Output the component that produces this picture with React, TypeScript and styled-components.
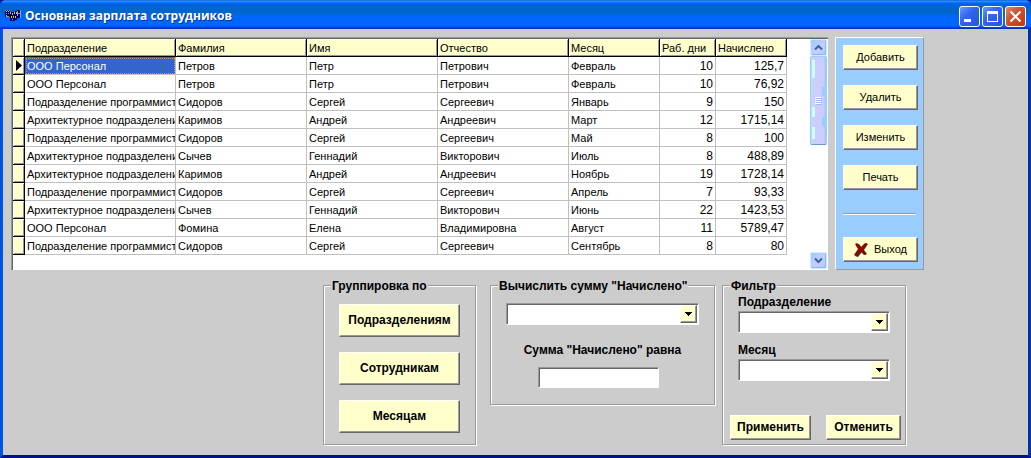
import React from 'react';
import styled, { createGlobalStyle, css } from 'styled-components';

const cream = '#ffffcc';
const face = '#cccccc';
const shade = '#999999';
const dark = '#666666';

const GlobalStyle = createGlobalStyle`
  *, *::before, *::after { box-sizing: border-box; }
  body { margin: 0; background: #0a1a9a; font: 11px/14px "Liberation Sans", Arial, sans-serif; color: #000; }
  button, input, select { font: inherit; color: inherit; }
`;

const Window = styled.div`
  display: flex;
  flex-direction: column;
  min-height: 100vh;
  border: solid;
  border-width: 0 3px 3px;
  border-color: #0054e3 #0831a0 #00138c #0054e3;
  border-radius: 6px 6px 0 0;
  background: ${face};
`;

const TitleBar = styled.header`
  display: flex;
  align-items: center;
  gap: 3px;
  height: 29px;
  margin: 0 -3px;
  padding: 3px 5px 0 5px;
  border-radius: 6px 6px 0 0;
  background: linear-gradient(#0048c8 0, #3399ff 1px, #0066ff 3px, #0060e0 5px, #0066cc 7px, #0066cc 13px, #0066ff 16px, #0066ff 26px, #0033cc 28px, #0033cc 29px);
`;

const Title = styled.h1`
  flex: 1;
  margin: 0;
  color: #fff;
  font: bold 12px/16px "Open Sans", "Noto Sans", sans-serif;
  text-shadow: 1px 1px 0 #003399;
`;

const CaptionButtons = styled.div`
  display: flex;
  gap: 2px;
`;

const CaptionButton = styled.button<{ $close?: boolean }>`
  display: grid;
  width: 21px;
  height: 21px;
  padding: 0;
  border: 1px solid #fff;
  border-radius: 3px;
  background: ${p => p.$close
    ? 'linear-gradient(135deg, #e8876a, #cc5533 40%, #cc3300)'
    : 'linear-gradient(135deg, #6699ff, #3366ee 40%, #2255dd)'};
`;

const Content = styled.main`
  flex: 1;
  padding: 8px 8px 9px;
`;

const TopRow = styled.div`
  display: flex;
  gap: 7px;
`;

const GridBox = styled.div`
  display: flex;
  justify-content: space-between;
  width: 817px;
  height: 233px;
  background: #fff;
  border: solid;
  border-width: 1px 0 0 1px;
  border-color: ${shade};
  box-shadow: inset 1px 1px 0 ${dark};
  padding: 1px 1px 0 1px;
`;

const Grid = styled.table`
  align-self: flex-start;
  width: 774px;
  table-layout: fixed;
  border-collapse: separate;
  border-spacing: 0;
`;

const HeadCell = styled.th<{ $w: number }>`
  width: ${p => p.$w}px;
  height: 18px;
  padding: 0 0 0 2px;
  overflow: hidden;
  border-right: 1px solid #000;
  border-bottom: 1px solid #000;
  background: ${cream};
  box-shadow: inset 1px 1px 0 #fff, inset -1px -1px 0 ${shade};
  font-weight: normal;
  text-align: left;
  white-space: nowrap;
`;

const Marker = styled.td`
  height: 18px;
  padding: 0 0 0 3px;
  border-right: 1px solid #000;
  border-bottom: 1px solid #000;
  background: ${cream};
  box-shadow: inset 1px 1px 0 #fff, inset -1px -1px 0 ${shade};
  svg { display: block; }
`;

const Cell = styled.td<{ $right?: boolean; $selected?: boolean }>`
  height: 18px;
  padding: 0 2px;
  overflow: hidden;
  border-right: 1px solid #c0c0c0;
  border-bottom: 1px solid #c0c0c0;
  text-align: ${p => (p.$right ? 'right' : 'left')};
  white-space: nowrap;
  ${p => p.$right && css`font-size: 12px;`}
  ${p => p.$selected && css`
    background: #3366cc;
    color: #fff;
    outline: 1px dotted #cc9933;
    outline-offset: -2px;
  `}
`;

const ScrollBar = styled.div`
  display: flex;
  flex-direction: column;
  width: 17px;
  margin-bottom: 1px;
`;

const ScrollArrow = styled.button`
  height: 17px;
  padding: 0;
  border: 1px solid #cceeff;
  border-radius: 2px;
  background: linear-gradient(135deg, #99ccff, #ccccff 60%, #99ccff);
  box-shadow: inset -1px -1px 0 #88bbee;
  svg { display: block; margin: auto; }
`;

const ScrollTrack = styled.div`
  flex: 1;
`;

const ScrollThumb = styled.div`
  display: grid;
  place-items: center;
  height: 89px;
  border: 1px solid #99ccff;
  border-bottom-color: #6699cc;
  border-radius: 2px;
  background:
    linear-gradient(#ccffff, #ccffff) 1px 3px / 3px 18px no-repeat,
    linear-gradient(#ccffff, #ccffff) 1px 50px / 3px 10px no-repeat,
    linear-gradient(#ccffff, #ccffff) 1px 70px / 3px 12px no-repeat,
    linear-gradient(#99ccff, #99ccff) 11px 30px / 3px 9px no-repeat,
    linear-gradient(#99ccff, #99ccff) 11px 60px / 3px 9px no-repeat,
    linear-gradient(90deg, #bbddff 0, #ccccff 3px, #ccccff 13px, #99ccff 14px);
`;

const ActionPanel = styled.nav`
  display: flex;
  flex-direction: column;
  gap: 15px;
  width: 89px;
  padding: 7px;
  border: 1px solid #fff;
  border-right-color: ${shade};
  border-bottom-color: ${shade};
  background: #99ccff;
`;

const Divider = styled.hr`
  width: 73px;
  height: 2px;
  margin: 8px 0 7px;
  border: 0;
  border-top: 1px solid ${shade};
  background: #fff;
`;

const Button = styled.button<{ $w?: number; $h?: number; $bold?: boolean }>`
  display: flex;
  align-items: center;
  justify-content: center;
  gap: 6px;
  width: ${p => p.$w ?? 75}px;
  height: ${p => p.$h ?? 25}px;
  padding: 0 0 1px;
  border: 1px solid #fff;
  border-right-color: ${dark};
  border-bottom-color: ${dark};
  background: ${cream};
  box-shadow: inset -1px -1px 0 ${shade};
  ${p => p.$bold && css`font-weight: bold; font-size: 12px;`}
`;

const Groups = styled.div`
  display: flex;
  align-items: flex-start;
  gap: 7px;
  padding: 7px 0 0 312px;
`;

const Group = styled.fieldset<{ $w: number; $h: number }>`
  width: ${p => p.$w}px;
  height: ${p => p.$h}px;
  margin: 0;
  padding: 0 15px;
  border: 1px solid ${shade};
  box-shadow: 1px 1px 0 #fff, inset 1px 1px 0 #fff;
  &:first-child { margin-right: 7px; }
`;

const Legend = styled.legend`
  margin-left: -8px;
  padding: 2px 1px 0;
  background: ${face};
  font-weight: bold;
  font-size: 12px;
`;

const Stack = styled.div<{ $gap: number; $top: number }>`
  display: flex;
  flex-direction: column;
  gap: ${p => p.$gap}px;
  padding-top: ${p => p.$top}px;
`;

const Field = styled.div<{ $center?: boolean; $gap?: number }>`
  display: flex;
  flex-direction: column;
  align-items: ${p => (p.$center ? 'center' : 'stretch')};
  gap: ${p => p.$gap ?? 2}px;
`;

const Label = styled.label`
  font-weight: bold;
  font-size: 12px;
`;

const sunken = css`
  border: 1px solid #fff;
  border-top-color: ${shade};
  border-left-color: ${shade};
  border-radius: 0;
  background: #fff;
  box-shadow: inset 1px 1px 0 ${dark};
`;

const TextBox = styled.input`
  ${sunken}
  width: 121px;
  height: 21px;
  margin-right: 8px;
  padding: 0 3px;
`;

const SelectWrap = styled.div`
  display: grid;
  grid-template-columns: 1fr 19px;
`;

const Select = styled.select`
  ${sunken}
  grid-area: 1 / 1 / 2 / 3;
  appearance: none;
  width: 100%;
  height: 22px;
  padding: 0 20px 0 3px;
`;

const DropMark = styled.span`
  grid-area: 1 / 2;
  display: grid;
  place-items: center;
  height: 18px;
  width: 17px;
  margin-top: 2px;
  border: 1px solid #fff;
  border-right-color: ${dark};
  border-bottom-color: ${dark};
  background: ${cream};
  box-shadow: inset -1px -1px 0 ${shade};
  pointer-events: none;
`;

const ButtonRow = styled.div`
  display: flex;
  justify-content: space-between;
  margin: 34px -11px 0 -8px;
`;

const columns = [
  { name: 'Подразделение', w: 151 },
  { name: 'Фамилия', w: 131 },
  { name: 'Имя', w: 131 },
  { name: 'Отчество', w: 131 },
  { name: 'Месяц', w: 91 },
  { name: 'Раб. дни', w: 56 },
  { name: 'Начислено', w: 71 },
];

const rows = [
  ['ООО Персонал', 'Петров', 'Петр', 'Петрович', 'Февраль', '10', '125,7'],
  ['ООО Персонал', 'Петров', 'Петр', 'Петрович', 'Февраль', '10', '76,92'],
  ['Подразделение программист', 'Сидоров', 'Сергей', 'Сергеевич', 'Январь', '9', '150'],
  ['Архитектурное подразделени', 'Каримов', 'Андрей', 'Андреевич', 'Март', '12', '1715,14'],
  ['Подразделение программист', 'Сидоров', 'Сергей', 'Сергеевич', 'Май', '8', '100'],
  ['Архитектурное подразделени', 'Сычев', 'Геннадий', 'Викторович', 'Июль', '8', '488,89'],
  ['Архитектурное подразделени', 'Каримов', 'Андрей', 'Андреевич', 'Ноябрь', '19', '1728,14'],
  ['Подразделение программист', 'Сидоров', 'Сергей', 'Сергеевич', 'Апрель', '7', '93,33'],
  ['Архитектурное подразделени', 'Сычев', 'Геннадий', 'Викторович', 'Июнь', '22', '1423,53'],
  ['ООО Персонал', 'Фомина', 'Елена', 'Владимировна', 'Август', '11', '5789,47'],
  ['Подразделение программист', 'Сидоров', 'Сергей', 'Сергеевич', 'Сентябрь', '8', '80'],
];

const AppIcon = () => (
  <svg width="17" height="16" viewBox="0 0 17 16" shapeRendering="crispEdges" aria-hidden="true">
    <path fill="#000066" d="M0 2h5v7H0zM5 4h5v9H5zM10 3h2v9h-2zM12 2h4v8h-4z" />
    <path fill="#9999cc" d="M0 2h1v1H0zM2 2h1v1H2zM4 2h1v1H4zM1 5h1v1H1zM3 5h1v1H3zM1 8h3v1H1zM12 3h1v5h-1zM15 2h1v8h-1zM13 5h2v1h-2z" />
    <path fill="#cccc33" d="M1 3h1v1H1zM3 3h1v1H3zM1 7h1v1H1zM5 4h1v2H5zM7 5h1v2H7zM9 4h1v2H9zM6 8h1v2H6zM8 8h1v2H8zM7 11h1v1H7zM11 4h1v2h-1zM10 8h1v2h-1z" />
  </svg>
);

const Chevron = ({ up }: { up?: boolean }) => (
  <svg width="9" height="7" viewBox="0 0 9 7" fill="none" stroke="#336699" strokeWidth="2" aria-hidden="true">
    <path d={up ? 'M1 5.5 4.5 2 8 5.5' : 'M1 1.5 4.5 5 8 1.5'} />
  </svg>
);

function DropDown({ id, label }: { id: string; label?: string }) {
  return (
    <SelectWrap>
      <Select id={id} aria-label={label} defaultValue="">
        <option value="" />
      </Select>
      <DropMark>
        <svg width="7" height="4" viewBox="0 0 7 4" shapeRendering="crispEdges" aria-hidden="true">
          <path d="M0 0h7v1H0zM1 1h5v1H1zM2 2h3v1H2zM3 3h1v1H3z" />
        </svg>
      </DropMark>
    </SelectWrap>
  );
}

export default function App() {
  return (
    <>
      <GlobalStyle />
      <Window>
        <TitleBar>
          <AppIcon />
          <Title>Основная зарплата сотрудников</Title>
          <CaptionButtons>
            <CaptionButton aria-label="Свернуть">
              <svg width="19" height="19" viewBox="0 0 19 19" aria-hidden="true"><path fill="#fff" d="M4 12h7v3H4z" /></svg>
            </CaptionButton>
            <CaptionButton aria-label="Развернуть">
              <svg width="19" height="19" viewBox="0 0 19 19" aria-hidden="true"><path fill="#fff" fillRule="evenodd" d="M4 4h11v11H4zM5 7v7h9V7z" /></svg>
            </CaptionButton>
            <CaptionButton $close aria-label="Закрыть">
              <svg width="19" height="19" viewBox="0 0 19 19" aria-hidden="true"><path stroke="#fff" strokeWidth="2" d="m4.500 4.500 10 10m0-10-10 10" /></svg>
            </CaptionButton>
          </CaptionButtons>
        </TitleBar>
        <Content>
          <TopRow>
            <GridBox>
              <Grid>
                <thead>
                  <tr>
                    <HeadCell $w={12} aria-label="Текущая запись" />
                    {columns.map(c => <HeadCell key={c.name} $w={c.w} scope="col">{c.name}</HeadCell>)}
                  </tr>
                </thead>
                <tbody>
                  {rows.map((row, r) => (
                    <tr key={r}>
                      <Marker>
                        {r === 0 && (
                          <svg width="6" height="11" viewBox="0 0 6 11" aria-hidden="true"><path d="M0 0v11l6-5.500z" /></svg>
                        )}
                      </Marker>
                      {row.map((value, c) => (
                        <Cell key={c} $right={c > 4} $selected={r === 0 && c === 0}>{value}</Cell>
                      ))}
                    </tr>
                  ))}
                </tbody>
              </Grid>
              <ScrollBar>
                <ScrollArrow aria-label="Вверх"><Chevron up /></ScrollArrow>
                <ScrollTrack>
                  <ScrollThumb>
                    <svg width="7" height="8" viewBox="0 0 7 8" shapeRendering="crispEdges" aria-hidden="true">
                      <path fill="#fff" d="M0 0h6v1H0zM0 2h6v1H0zM0 4h6v1H0zM0 6h6v1H0z" />
                      <path fill="#99bbee" d="M1 1h6v1H1zM1 3h6v1H1zM1 5h6v1H1zM1 7h6v1H1z" />
                    </svg>
                  </ScrollThumb>
                </ScrollTrack>
                <ScrollArrow aria-label="Вниз"><Chevron /></ScrollArrow>
              </ScrollBar>
            </GridBox>
            <ActionPanel>
              <Button>Добавить</Button>
              <Button>Удалить</Button>
              <Button>Изменить</Button>
              <Button>Печать</Button>
              <Divider />
              <Button>
                <svg width="14" height="15" viewBox="0 0 14 15" aria-hidden="true">
                  <path fill="#333" d="m2 3 3 5-4 6 3 1 4-5 3 3 2-1-3-4 4-6-2-1-4 5-3-4z" />
                  <path fill="#990000" d="M1 2 3 1l4 4 4-4 2 1-4 5 3 5-2 1-4-4-4 5-2-1 4-6z" />
                </svg>
                Выход
              </Button>
            </ActionPanel>
          </TopRow>
          <Groups>
            <Group $w={152} $h={168}>
              <Legend>Группировка по</Legend>
              <Stack $gap={15} $top={11}>
                <Button $bold $w={121} $h={33}>Подразделениям</Button>
                <Button $bold $w={121} $h={33}>Сотрудникам</Button>
                <Button $bold $w={121} $h={33}>Месяцам</Button>
              </Stack>
            </Group>
            <Group $w={225} $h={128}>
              <Legend>Вычислить сумму "Начислено"</Legend>
              <Stack $gap={18} $top={10}>
                <DropDown id="sum-by" label='Вычислить сумму "Начислено"' />
                <Field $center $gap={10}>
                  <Label htmlFor="sum">Сумма "Начислено" равна</Label>
                  <TextBox id="sum" />
                </Field>
              </Stack>
            </Group>
            <Group $w={184} $h={168}>
              <Legend>Фильтр</Legend>
              <Stack $gap={10} $top={2}>
                <Field>
                  <Label htmlFor="dept">Подразделение</Label>
                  <DropDown id="dept" />
                </Field>
                <Field>
                  <Label htmlFor="month">Месяц</Label>
                  <DropDown id="month" />
                </Field>
              </Stack>
              <ButtonRow>
                <Button $bold $w={81}>Применить</Button>
                <Button $bold>Отменить</Button>
              </ButtonRow>
            </Group>
          </Groups>
        </Content>
      </Window>
    </>
  );
}
